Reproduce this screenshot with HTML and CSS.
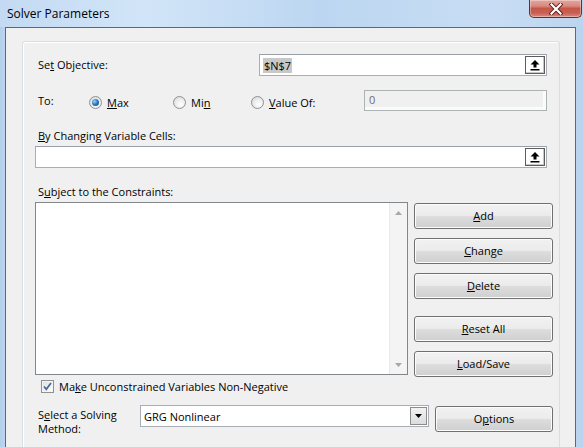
FILE: index.html
```html
<!DOCTYPE html>
<html>
<head>
<meta charset="utf-8">
<title>Solver Parameters</title>
<link rel="stylesheet" href="styles.css">
</head>
<body>
<div class="window">
  <div class="titlebar">
    <span class="title">Solver Parameters</span>
    <div class="close">
      <svg width="14" height="12" viewBox="0 0 14 12">
        <path d="M2.5 1.5 L11.5 10.5 M11.5 1.5 L2.5 10.5" stroke="#5a1c17" stroke-width="4" stroke-linecap="square" fill="none"/>
        <path d="M2.5 1.5 L11.5 10.5 M11.5 1.5 L2.5 10.5" stroke="#ffffff" stroke-width="2.2" stroke-linecap="square" fill="none"/>
      </svg>
    </div>
  </div>
  <div class="client">
    <div class="group">
      <div class="row row-obj">
        <span class="lbl lbl-obj">Se<u>t</u> Objective:</span>
        <div class="refbox">
          <span class="sel">$N$7</span>
          <span class="collapse">
            <svg width="12" height="12" viewBox="0 0 12 12">
              <path d="M6 1 L10.5 5.5 L7.5 5.5 L7.5 8.5 L4.5 8.5 L4.5 5.5 L1.5 5.5 Z" fill="#000"/>
              <rect x="1.5" y="10" width="9" height="1.5" fill="#000"/>
            </svg>
          </span>
        </div>
      </div>
      <div class="row row-to">
        <span class="lbl lbl-to">To:</span>
        <span class="opt opt-max"><span class="radio on"></span><span><u>M</u>ax</span></span>
        <span class="opt opt-min"><span class="radio"></span><span>Mi<u>n</u></span></span>
        <span class="opt opt-val"><span class="radio"></span><span><u>V</u>alue Of:</span></span>
        <div class="valbox">0</div>
      </div>
      <div class="lbl lbl-block lbl-change"><u>B</u>y Changing Variable Cells:</div>
      <div class="refbox refbox-full">
        <span class="collapse">
          <svg width="12" height="12" viewBox="0 0 12 12">
            <path d="M6 1 L10.5 5.5 L7.5 5.5 L7.5 8.5 L4.5 8.5 L4.5 5.5 L1.5 5.5 Z" fill="#000"/>
            <rect x="1.5" y="10" width="9" height="1.5" fill="#000"/>
          </svg>
        </span>
      </div>
      <div class="lbl lbl-block lbl-subject">S<u>u</u>bject to the Constraints:</div>
      <div class="row row-list">
        <div class="listbox">
          <div class="listarea"></div>
          <div class="scrollbar">
            <svg width="7" height="4" viewBox="0 0 7 4"><path d="M0 4 L3.5 0 L7 4 Z" fill="#a8a8a8"/></svg>
            <svg width="7" height="4" viewBox="0 0 7 4"><path d="M0 0 L3.5 4 L7 0 Z" fill="#a8a8a8"/></svg>
          </div>
        </div>
        <div class="btncol">
          <div class="btn"><span><u>A</u>dd</span></div>
          <div class="btn"><span><u>C</u>hange</span></div>
          <div class="btn"><span><u>D</u>elete</span></div>
          <div class="btn btn-sep"><span><u>R</u>eset All</span></div>
          <div class="btn"><span><u>L</u>oad/Save</span></div>
        </div>
      </div>
      <div class="row row-check">
        <span class="checkbox">
          <svg width="11" height="11" viewBox="0 0 11 11"><path d="M2 5.5 L4.3 8.3 L9 2" stroke="#4a6a9c" stroke-width="1.8" fill="none"/></svg>
        </span>
        <span>Ma<u>k</u>e Unconstrained Variables Non-Negative</span>
      </div>
      <div class="row row-method">
        <span class="lbl lbl-method">S<u>e</u>lect a Solving<br>Method:</span>
        <div class="combo">
          <span class="combo-text">GRG Nonlinear</span>
          <span class="combo-btn">
            <svg width="7" height="4" viewBox="0 0 7 4"><path d="M0 0 L7 0 L3.5 4 Z" fill="#000"/></svg>
          </span>
        </div>
        <div class="btn btn-options"><span>O<u>p</u>tions</span></div>
      </div>
    </div>
  </div>
</div>
</body>
</html>
```

FILE: styles.css
```css
* { box-sizing: border-box; }
html, body { margin: 0; padding: 0; }
body {
  width: 583px;
  height: 447px;
  overflow: hidden;
  font-family: "Open Sans", "Noto Sans", sans-serif;
  font-size: 11px;
  color: #000;
  background: #bdd6ef;
}
u { text-decoration: underline; text-underline-offset: 1px; }

.window {
  height: 447px;
  display: flex;
  flex-direction: column;
  background: linear-gradient(90deg, #b4cfec 0%, #c7ddf4 2%, #bcd6f0 30%, #c9def4 70%, #bad4ef 100%);
}
.titlebar {
  height: 27px;
  flex: none;
  display: flex;
  align-items: flex-start;
  justify-content: space-between;
  background: linear-gradient(90deg, #c3daf2 0%, #d2e5f8 25%, #bcd6f1 55%, #c8ddf4 85%, #bbd5ef 100%);
}
.title {
  margin: 6px 0 0 7px;
  font-size: 12px;
  line-height: 16px;
}
.close {
  width: 53px;
  height: 18px;
  margin-right: 1px;
  border: 1px solid #6e2a25;
  border-top: none;
  border-radius: 0 0 5px 5px;
  background: linear-gradient(180deg, #e3a69e 0%, #d98a80 35%, #c5574a 50%, #c85e52 75%, #d98b80 100%);
  box-shadow: inset 0 0 0 1px rgba(255,255,255,0.35);
  display: flex;
  align-items: center;
  justify-content: center;
}

.client {
  flex: 1;
  margin: 0 7px 0 5px;
  border: 1px solid #546a82;
  border-bottom: none;
  background: #f0f0f0;
  padding: 13px 15px 0 16px;
}
.group {
  height: 420px;
  border: 1px solid #d5dfe5;
  border-bottom: none;
  border-radius: 3px 3px 0 0;
  box-shadow: inset 1px 1px 0 #ffffff;
  padding: 12px 12px 0 12px;
}

.row { display: flex; align-items: flex-start; }
.lbl { padding-left: 3px; }

.row-obj { height: 22px; }
.lbl-obj { width: 224px; line-height: 22px; }
.refbox {
  flex: 1;
  height: 22px;
  background: #fff;
  border: 1px solid #a9adb4;
  border-top-color: #9a9ea6;
  display: flex;
  align-items: center;
  justify-content: space-between;
  padding: 0 1px 0 3px;
}
.refbox-full { margin-top: 3px; justify-content: flex-end; }
.sel {
  background: #c8c8c8;
  line-height: 15px;
  padding: 0 1px;
}
.collapse {
  width: 20px;
  height: 18px;
  border: 1px solid #5c5c5c;
  background: #fff;
  box-shadow: inset -1px -1px 0 #c8c8c8;
  display: flex;
  align-items: center;
  justify-content: center;
}

.row-to { margin-top: 14px; height: 21px; }
.lbl-to { width: 54px; line-height: 21px; }
.opt {
  display: flex;
  align-items: center;
  gap: 5px;
  margin-top: 2px;
  height: 21px;
}
.opt-max { width: 84px; }
.opt-min { width: 78px; }
.opt-val { width: 113px; }
.radio {
  width: 13px;
  height: 13px;
  border-radius: 50%;
  border: 1px solid #8f9193;
  background: radial-gradient(circle at 60% 65%, #ffffff 0%, #e9e9e9 55%, #d2d2d2 100%);
  display: flex;
  align-items: center;
  justify-content: center;
  flex: none;
}
.radio.on::after {
  content: "";
  width: 7px;
  height: 7px;
  border-radius: 50%;
  background: radial-gradient(circle at 35% 35%, #9fd3f7 0%, #2f7fc4 45%, #0c3f7c 100%);
}
.valbox {
  flex: 1;
  height: 21px;
  border: 1px solid #adb2b5;
  background: #f0f0f0;
  box-shadow: inset -3px -3px 0 #fbfbfb;
  color: #6d6d6d;
  padding-left: 4px;
  line-height: 17px;
}

.lbl-block { line-height: 15px; }
.lbl-change { margin-top: 17px; }
.lbl-subject { margin-top: 16px; }

.row-list { margin-top: 3px; height: 176px; margin-right: -6px; gap: 6px; }
.listbox {
  width: 373px;
  height: 173px;
  border: 1px solid #82878c;
  background: #fff;
  display: flex;
}
.listarea { flex: 1; }
.scrollbar {
  width: 18px;
  background: #f4f4f4;
  border-left: 1px solid #e9e9e9;
  display: flex;
  flex-direction: column;
  justify-content: space-between;
  align-items: center;
  padding: 8px 0 7px;
}
.btncol {
  width: 139px;
  margin-top: 1px;
  display: flex;
  flex-direction: column;
  gap: 9px;
}
.btn {
  height: 26px;
  border: 1px solid #707070;
  border-radius: 3px;
  background: linear-gradient(180deg, #f2f2f2 0%, #ebebeb 48%, #dddddd 52%, #cfcfcf 100%);
  box-shadow: inset 0 0 0 1px #fcfcfc;
  display: flex;
  align-items: center;
  justify-content: center;
  line-height: 15px;
  padding-bottom: 2px;
}
.btn-sep { margin-top: 8px; }

.row-check {
  margin-top: 1px;
  height: 16px;
  padding-left: 6px;
  gap: 5px;
  line-height: 16px;
}
.checkbox {
  width: 13px;
  height: 13px;
  margin-top: 1px;
  border: 1px solid #8f9193;
  background: linear-gradient(135deg, #dcdcdc 0%, #f4f4f4 60%, #ffffff 100%);
  box-shadow: inset 0 0 0 1px #f4f4f4;
  display: flex;
  align-items: center;
  justify-content: center;
  flex: none;
}

.row-method { margin-top: 10px; margin-right: -6px; }
.lbl-method { width: 105px; padding-top: 3px; line-height: 14px; }
.combo {
  width: 289px;
  height: 22px;
  background: #fff;
  border: 1px solid #a9adb4;
  display: flex;
  align-items: center;
  justify-content: space-between;
  padding: 0 1px 0 3px;
}
.combo-btn {
  width: 17px;
  height: 18px;
  border: 1px solid #8c8c8c;
  background: linear-gradient(180deg, #f2f2f2, #dcdcdc);
  display: flex;
  align-items: center;
  justify-content: center;
}
.btn-options {
  width: 118px;
  margin-left: 6px;
  margin-top: 1px;
}
```
